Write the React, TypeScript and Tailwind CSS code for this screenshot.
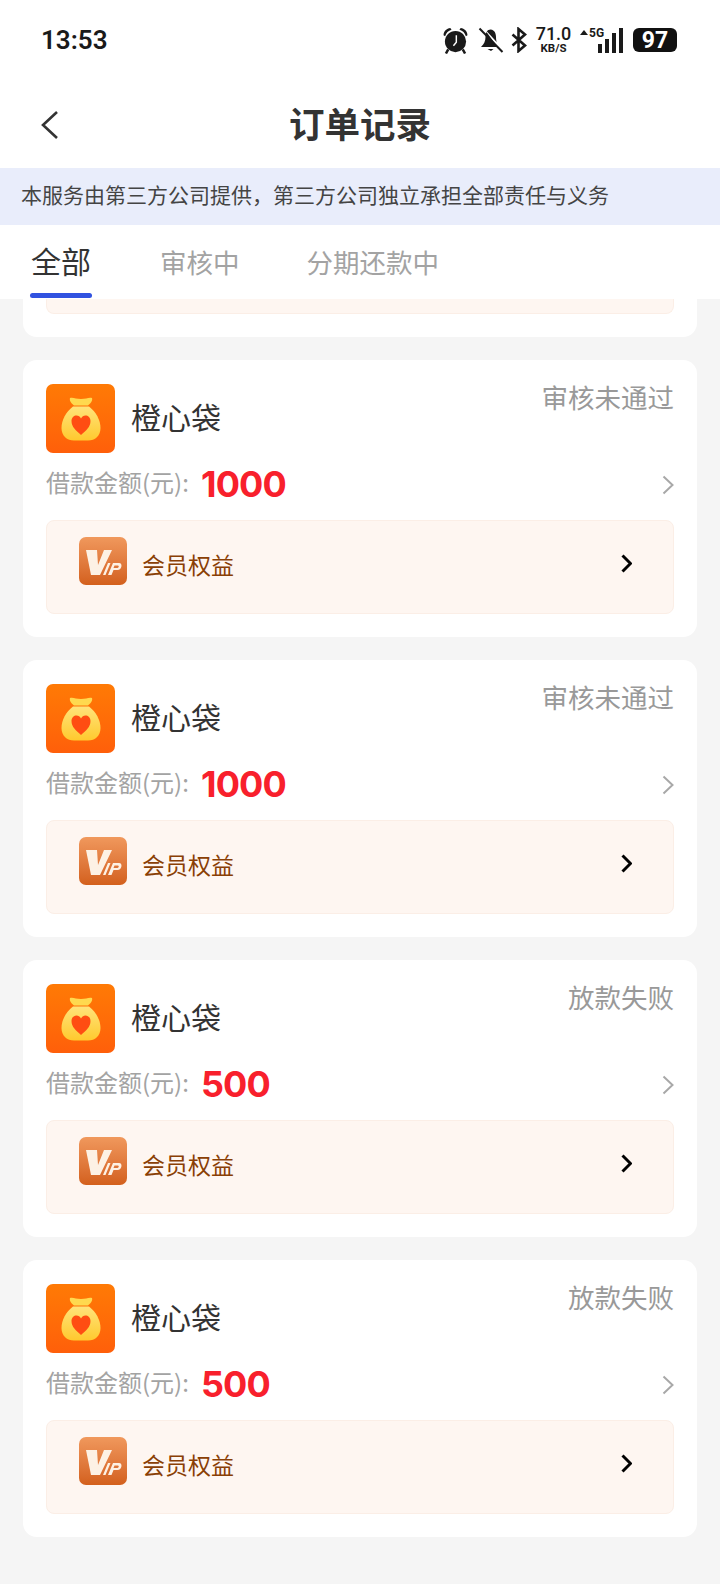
import React from "react";

const orders = [
  { amount: "1000", status: "审核未通过" },
  { amount: "1000", status: "审核未通过" },
  { amount: "500", status: "放款失败" },
  { amount: "500", status: "放款失败" },
];

function AlarmIcon() {
  return (
    <svg width="27" height="27" viewBox="0 0 26 26">
      <circle cx="13" cy="14" r="10.2" fill="#1a1a1a" />
      <path d="M1.5 8 C1.5 4 4.5 1.5 8 1 L9.2 2.6 C6 3.6 4 5.5 3 8.8Z" fill="#1a1a1a" />
      <path d="M24.5 8 C24.5 4 21.5 1.5 18 1 L16.8 2.6 C20 3.6 22 5.5 23 8.8Z" fill="#1a1a1a" />
      <path d="M6 21.5 L3.8 25.5 M20 21.5 L22.2 25.5" stroke="#1a1a1a" strokeWidth="2.4" />
      <path d="M13.8 8 V14.6 L11 18" stroke="#fff" strokeWidth="1.4" fill="none" />
    </svg>
  );
}

function BellOffIcon() {
  return (
    <svg width="27" height="26" viewBox="0 0 26 26">
      <path d="M13 3 C8.5 3 8 7 8 10 C8 14 6.5 17 3.5 20 H20 L9 5" fill="#1a1a1a" />
      <path d="M13 2.5 C17.5 3 18.5 7 18.5 10 C18.5 12 18.8 14 19.4 15.2 L9.5 4.4 C10.4 3.2 11.6 2.6 13 2.5Z" fill="#1a1a1a" />
      <path d="M10 22 H16 L13.5 24 Z" fill="#1a1a1a" />
      <path d="M2 1.5 L25 25" stroke="#1a1a1a" strokeWidth="2" />
    </svg>
  );
}

function BluetoothIcon() {
  return (
    <svg width="18" height="26" viewBox="0 0 18 26">
      <path d="M2.5 7.5 L15 18.5 L8.5 24 V2 L15 7.5 L2.5 18.5" stroke="#1a1a1a" strokeWidth="2.6" fill="none" />
    </svg>
  );
}

function SignalIcon() {
  return (
    <div className="relative w-[43px] h-[26px]">
      <svg className="absolute left-0 top-[3px]" width="8" height="7" viewBox="0 0 8 7">
        <path d="M4 0 L8 5 H0Z" fill="#1a1a1a" />
      </svg>
      <span className="absolute left-[9px] top-[-1px] text-[12px] leading-[14px] font-bold text-[#1a1a1a] font-['Roboto',sans-serif]">5G</span>
      <div className="absolute right-0 bottom-0 flex items-end gap-[3px]">
        <div className="w-[4px] h-[9px] bg-[#1a1a1a]" />
        <div className="w-[4px] h-[14px] bg-[#1a1a1a]" />
        <div className="w-[4px] h-[20px] bg-[#1a1a1a]" />
        <div className="w-[4px] h-[25px] bg-[#1a1a1a]" />
      </div>
    </div>
  );
}

function StatusBar() {
  return (
    <div className="h-[80px] pl-[41px] pr-[43px] flex items-center justify-between font-['Roboto',sans-serif] text-[#1a1a1a]">
      <span className="text-[26px] font-semibold">13:53</span>
      <div className="flex items-center">
        <AlarmIcon />
        <div className="w-[8px]" />
        <BellOffIcon />
        <div className="w-[6px]" />
        <BluetoothIcon />
        <div className="w-[8px]" />
        <div className="flex flex-col items-center w-[35px]">
          <span className="text-[18px] leading-[16px] font-medium">71.0</span>
          <span className="text-[11.5px] leading-[11px] mt-[1px] font-bold">KB/S</span>
        </div>
        <div className="w-[9px]" />
        <SignalIcon />
        <div className="w-[10px]" />
        <div className="w-[44px] h-[24px] rounded-[6px] bg-[#111] flex items-center justify-center text-white text-[23px] font-bold leading-none">
          97
        </div>
      </div>
    </div>
  );
}

function BagIcon() {
  return (
    <div className="w-[69px] h-[69px] rounded-[7px] bg-gradient-to-b from-[#ff7a05] to-[#ff5f0a] flex items-center justify-center shrink-0">
      <svg width="40" height="44" viewBox="0 0 40 44">
        <defs>
          <linearGradient id="bagFill" x1="0" y1="0" x2="0" y2="1">
            <stop offset="0" stopColor="#ffe37a" />
            <stop offset="1" stopColor="#ffc92e" />
          </linearGradient>
        </defs>
        <path d="M9 1 C12 0 15 2 20 2 C25 2 28 0 31 1 C32 4 29 7 27 8.5 H13 C11 7 8 4 9 1Z" fill="#ffd94f" />
        <path d="M12 9.5 H28 C35 15 39.5 23 39.5 31 C39.5 39 34 43.5 27 43.5 H13 C6 43.5 0.5 39 0.5 31 C0.5 23 5 15 12 9.5Z" fill="url(#bagFill)" />
        <path d="M20 38 C15 33.5 10.5 30 10.5 24 C10.5 20.5 13 18.5 15.5 18.5 C17.5 18.5 19 19.6 20 21.4 C21 19.6 22.5 18.5 24.5 18.5 C27 18.5 29.5 20.5 29.5 24 C29.5 30 25 33.5 20 38Z" fill="#ff4d12" />
      </svg>
    </div>
  );
}

function VipIcon() {
  return (
    <div className="w-[48px] h-[48px] rounded-[7px] bg-gradient-to-b from-[#f0985c] to-[#d3601c] shrink-0">
      <svg width="48" height="48" viewBox="0 0 48 48">
        <path d="M7 13 H18 L19 28 L25 13 H33 L21 38 H12Z" fill="#fdf1e4" />
        <path d="M24 38 L29 26 H31.5 L26.5 38Z" fill="#fdf1e4" />
        <path d="M29 38 L34 26 H40 C44 26 43 33 38.5 33 H34.5 L32.5 38Z M35.5 28.5 L34.5 31 H38 C40 31 40.5 28.5 38.5 28.5Z" fill="#fdf1e4" fillRule="evenodd" />
      </svg>
    </div>
  );
}

function Chevron({ color, weight, w, h }: { color: string; weight: number; w: number; h: number }) {
  return (
    <svg width={w} height={h} viewBox={`0 0 ${w} ${h}`}>
      <path d={`M1.5 1.5 L${w - 1.5} ${h / 2} L1.5 ${h - 1.5}`} stroke={color} strokeWidth={weight} fill="none" />
    </svg>
  );
}

function OrderCard({ amount, status }: { amount: string; status: string }) {
  return (
    <div className="h-[277px] rounded-[14px] bg-white pt-[23px] px-[23px]">
      <div className="flex items-start justify-between h-[69px] translate-y-[1px]">
        <div className="flex items-center gap-[16px]">
          <BagIcon />
          <span className="text-[30px] leading-[40px] text-[#333] mt-[-6px]">橙心袋</span>
        </div>
        <span className="text-[26.5px] leading-[31px] text-[#999] mt-[-3px]">{status}</span>
      </div>
      <div className="flex items-center h-[44px] mt-[10px]">
        <span className="text-[24px] text-[#a3a3a3] mt-[-4px]">借款金额(元):</span>
        <span className="ml-[12px] text-[36px] leading-[44px] tracking-[-0.8px] font-bold text-[#f8202c] font-['Inter',sans-serif]">{amount}</span>
        <div className="ml-auto mt-[1px]">
          <Chevron color="#a8a8a8" weight={2} w={12} h={20} />
        </div>
      </div>
      <div className="mt-[14px] h-[94px] rounded-[8px] border border-[#fbeee6] bg-[#fef6f1] pl-[32px] pr-[41px] flex items-start justify-between">
        <div className="flex items-center gap-[15px] mt-[16px]">
          <VipIcon />
          <span className="text-[23px] text-[#8a3f05] mt-[6px]">会员权益</span>
        </div>
        <div className="mt-[33px]">
          <Chevron color="#000" weight={3} w={11} h={19} />
        </div>
      </div>
    </div>
  );
}

export default function App() {
  return (
    <div className="w-[720px] h-[1584px] overflow-hidden bg-[#f5f5f5] font-['Noto_Sans_CJK_SC','Noto_Sans',sans-serif]">
      <div className="bg-white">
        <StatusBar />
        <div className="h-[88px] relative flex items-center justify-center">
          <svg className="absolute left-[40px] top-[30px]" width="20" height="30" viewBox="0 0 20 30">
            <path d="M17 2 L3 15 L17 28" stroke="#333" strokeWidth="2.6" fill="none" />
          </svg>
          <h1 className="text-[35.5px] font-bold text-[#333] mt-[-2px]">订单记录</h1>
        </div>
        <div className="h-[57px] bg-[#e9edfb] pl-[21px] flex items-center text-[21px] text-[#444]">
          <span className="mt-[-4px]">本服务由第三方公司提供，第三方公司独立承担全部责任与义务</span>
        </div>
        <div className="h-[74px] flex items-start pl-[30px]">
          <div className="flex flex-col items-center w-[62px]">
            <span className="text-[30px] leading-[40px] mt-[15px] text-[#333]">全部</span>
            <div className="w-[62px] h-[5px] rounded-[3px] bg-[#3152e0] mt-[13px]" />
          </div>
          <span className="ml-[68px] mt-[19px] text-[26.5px] leading-[36px] text-[#a3a3a3]">审核中</span>
          <span className="ml-[67px] mt-[19px] text-[26.5px] leading-[36px] text-[#a3a3a3]">分期还款中</span>
        </div>
      </div>
      <div className="px-[23px] flex flex-col gap-[23px]">
        <div className="h-[38px] rounded-b-[14px] bg-white px-[23px]">
          <div className="h-[15px] rounded-b-[8px] border border-t-0 border-[#fbeee6] bg-[#fef6f1]" />
        </div>
        {orders.map((o, i) => (
          <OrderCard key={i} amount={o.amount} status={o.status} />
        ))}
      </div>
    </div>
  );
}
